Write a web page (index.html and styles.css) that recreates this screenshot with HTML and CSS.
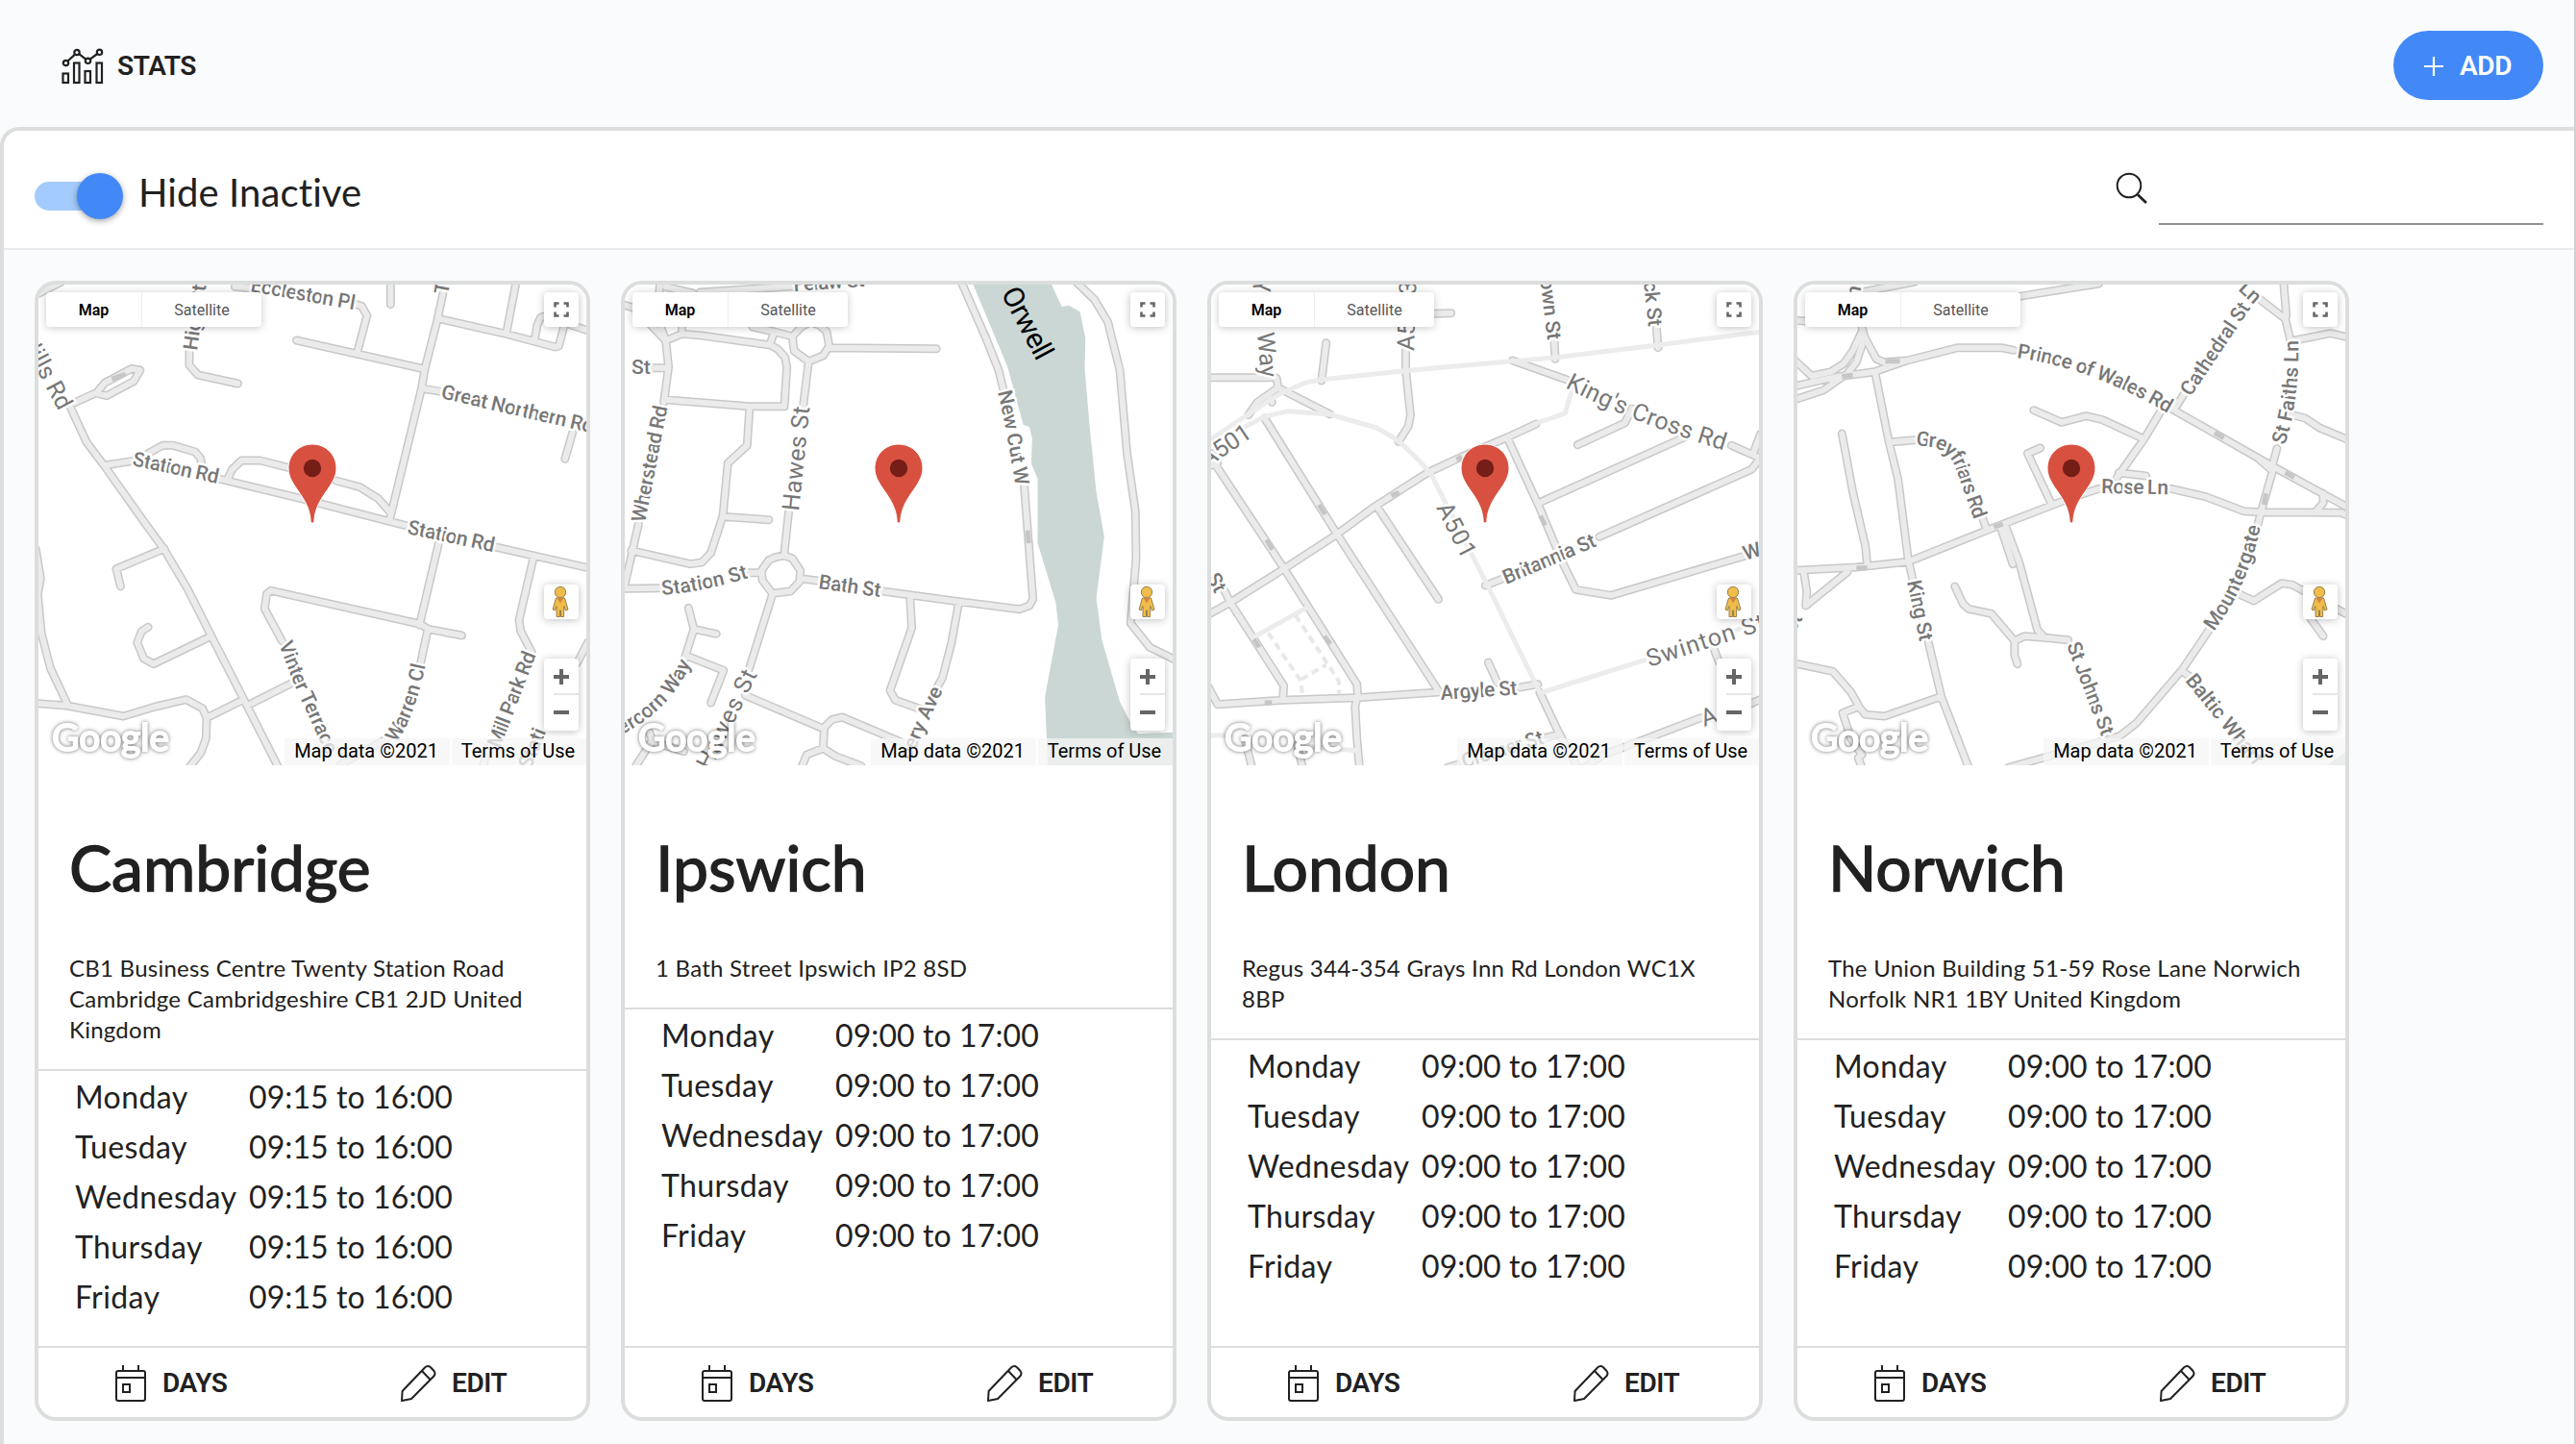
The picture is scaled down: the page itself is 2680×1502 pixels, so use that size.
FILE: index.html
```html
<!DOCTYPE html>
<html lang="en">
<head>
<meta charset="utf-8">
<title>Locations</title>
<link rel="stylesheet" href="styles.css">
</head>
<body>
<svg class="sprite" aria-hidden="true">
  <symbol id="i-stats" viewBox="0 0 44 38"><g fill="none" stroke="currentColor" stroke-width="2.2"><rect x="1.5" y="26.5" width="5.5" height="9.5"/><rect x="13" y="15.5" width="5.5" height="20.5"/><rect x="24.5" y="24" width="5.5" height="12"/><rect x="36.5" y="15.5" width="5.5" height="20.5"/><circle cx="4.5" cy="15.5" r="2.7"/><circle cx="16" cy="4.5" r="2.7"/><circle cx="27.5" cy="13.3" r="2.7"/><circle cx="39.5" cy="4.3" r="2.7"/><path d="M6.500 13.500 14 6.600M18.200 6.200 25.300 11.600M29.600 11.600 37.300 6"/></g></symbol>
  <symbol id="i-plus" viewBox="0 0 22 22"><path d="M11 0V22M0 11H22" stroke="currentColor" stroke-width="2.4"/></symbol>
  <symbol id="i-search" viewBox="0 0 34 34"><g fill="none" stroke="currentColor" stroke-width="2"><circle cx="14" cy="14" r="12.3"/><path d="M23 23.500 32 32" stroke-width="2.8"/></g></symbol>
  <symbol id="i-days" viewBox="0 0 34 40"><g fill="none" stroke="currentColor" stroke-width="2"><rect x="2" y="7" width="30" height="31" rx="2"/><path d="M2 14H32M9 1V7M25 1V7"/><rect x="9" y="21" width="7" height="8"/></g></symbol>
  <symbol id="i-edit" viewBox="0 0 38 40"><g fill="none" stroke="currentColor" stroke-width="2" stroke-linejoin="round"><path d="M2 38 2.600 28 26 3.500Q29 .8 32 3.200L35.500 7Q37.500 9.500 35.500 12.300L12 36Z"/><path d="M23 7 31.500 16"/></g></symbol>
  <symbol id="i-full" viewBox="0 0 16 16"><path d="M1.500 5.500V1.500H5.500M10.500 1.500H14.500V5.500M14.500 10.500V14.500H10.500M5.500 14.500H1.500V10.500" fill="none" stroke="#666" stroke-width="2.6"/></symbol>
  <symbol id="i-peg" viewBox="0 0 18 34"><g fill="#f0bc4b" stroke="#98804c" stroke-width="1"><path d="M4.500 13H13.500L17 25 14.500 26 12.800 21.500 12.500 32.500H9.500V26H8.500V32.500H5L5 21.500 3.200 26 1 25Z"/><circle cx="9" cy="7" r="5.7"/></g><path d="M5.500 13.200H12.500L9 18.500Z" fill="#d9853b"/></symbol>
  <symbol id="i-pin" viewBox="0 0 52 84"><path d="M26 1C12 1 1 12 1 26 1 45 23 55 24.200 81.500Q26 85 27.800 81.500C29 55 51 45 51 26 51 12 40 1 26 1Z" fill="#d85140" stroke="#fff" stroke-width="1"/><circle cx="26" cy="26" r="9.2" fill="#751e17"/></symbol>
  <symbol id="i-google" viewBox="0 0 140 50"><text class="google" x="8" y="33" textLength="122" lengthAdjust="spacingAndGlyphs">Google</text></symbol>
</svg>

<div class="page">
  <header class="topbar">
    <button class="btn stats"><svg class="i-stats"><use href="#i-stats"/></svg>STATS</button>
    <button class="btn add"><svg class="i-plus"><use href="#i-plus"/></svg>ADD</button>
  </header>
  <main class="panel">
    <div class="toolbar">
      <label class="toggle"><span class="track"><span class="thumb"></span></span>Hide Inactive</label>
      <div class="search"><svg class="i-search"><use href="#i-search"/></svg><span class="field"></span></div>
    </div>
    <div class="cards">

      <article class="card">
        <div class="map">
          <svg class="tiles" viewBox="27 33 1514 1500" preserveAspectRatio="none">
            <defs><path id="r1" class="road" d="M115 415L160 525 210 600 320 775 375 860 440 985 505 1130 600 1340 690 1540M120 405L188 370 210 340 285 295 308 300 290 335 215 380 188 372M20 65L90 25M444 235V285L468 315 578 342M570 40L620 45M905 95L920 100 935 130 908 245M740 207L1095 297M1000 20V95M1145 60L1130 140 1095 295 1085 360 998 765M1135 140L1320 187 1455 228 1465 225 1480 160M1320 185L1348 20M1398 208L1405 160 1415 135 1430 130M1500 160L1550 178M1090 358L1140 367M1503 495L1482 577M210 597L290 583M330 560L370 535 400 535 460 555 475 575 478 600M530 640L750 700 1000 773 1050 787M550 640L562 610 588 582 640 582 720 605M850 645L915 665 965 700 1000 745M1290 852L1550 918M1133 840L1080 1095M1395 885L1355 1080 1360 1115 1390 1180M1197 1128L1105 1108 1080 1092 670 988 658 998 652 1045 700 1145M1103 1108L1083 1215M375 857L242 920 254 975M505 1130L345 1217 318 1200 300 1150 312 1115 330 1102M730 1275L607 1345M590 1330L492 1385M20 1340L105 1347 262 1380 350 1350 435 1328 480 1355 492 1385 490 1450 475 1495 440 1545M20 860L33 950 25 1000 35 1120 60 1230 108 1345M1545 1150L1515 1215M860 1532L990 1450M1255 1540L1270 1470"/></defs>
            <use href="#r1" class="casing"/><use href="#r1" class="surface"/>
            <path class="arrow" d="M230 328L268 312"/>
          </svg>
          <svg class="labels" viewBox="0 0 570 500">
            <defs><path id="p1a" d="M250 374L267 418 325 546"/><path id="p1b" d="M372 477Q391 452 403 394L408 370"/></defs>
            <text transform="translate(220 7) rotate(10)" textLength="110">Eccleston Pl</text>
            <text transform="translate(418 118) rotate(13)" textLength="162">Great Northern Rd</text>
            <text transform="translate(97 188) rotate(12)" textLength="91">Station Rd</text>
            <text transform="translate(383 259) rotate(12)" textLength="92">Station Rd</text>
            <text class="lg end" transform="translate(21 132) rotate(62)">Hills Rd</text>
            <text transform="translate(165 69) rotate(-82)">High St</text>
            <text transform="translate(426 11) rotate(-80)">Tenison Rd</text>
            <text class="tight"><textPath href="#p1a">Vinter Terrace</textPath></text>
            <text class="tight"><textPath href="#p1b">Warren Cl</textPath></text>
            <text transform="translate(480 483) rotate(-69)" textLength="105">Mill Park Rd</text>
            <text transform="translate(512 505) rotate(-68)">Stati</text>
          </svg>
          <div class="maptype"><span class="on">Map</span><span>Satellite</span></div>
          <span class="ctl full"><svg><use href="#i-full"/></svg></span>
          <svg class="pin"><use href="#i-pin"/></svg>
          <span class="ctl peg"><svg><use href="#i-peg"/></svg></span>
          <span class="ctl zoom"><i class="in"></i><i class="out"></i></span>
          <svg class="logo"><use href="#i-google"/></svg>
          <div class="credit"><span>Map data ©2021</span><span>Terms of Use</span></div>
        </div>
        <h2>Cambridge</h2>
        <p class="address">CB1 Business Centre Twenty Station Road Cambridge Cambridgeshire CB1 2JD United Kingdom</p>
        <dl class="hours"><dt>Monday</dt><dd>09:15 to 16:00</dd><dt>Tuesday</dt><dd>09:15 to 16:00</dd><dt>Wednesday</dt><dd>09:15 to 16:00</dd><dt>Thursday</dt><dd>09:15 to 16:00</dd><dt>Friday</dt><dd>09:15 to 16:00</dd></dl>
        <footer><button class="btn"><svg class="i-days"><use href="#i-days"/></svg>DAYS</button><button class="btn"><svg class="i-edit"><use href="#i-edit"/></svg>EDIT</button></footer>
      </article>

      <article class="card">
        <div class="map">
          <svg class="tiles" viewBox="27 33 1514 1500" preserveAspectRatio="none">
            <defs><path id="r2" class="road" d="M20 95L50 105 100 160 140 208 185 187 240 192 430 222 450 235 470 260 475 290 468 413 370 413 140 392M140 205L148 290 135 400M95 293H148M125 20L122 60M140 40L215 60M140 205L125 160M185 187V160M235 57L500 38M380 165L440 180 490 195M440 182L428 220M515 165L490 195 495 240 535 273 575 255 592 225 585 180 565 160 540 150ZM592 230L888 233M535 275L520 412M480 742L467 880M372 415L365 535 312 590 298 755 265 870 240 900 208 905 45 863M298 757L425 767M65 780L25 980M20 982L125 980M355 932H405M440 885L467 878 490 888 512 925 510 960 485 990 435 997 407 955 405 925 425 893ZM512 950L565 958M740 990L950 1022 1118 1046 1145 1035 1155 1015 1130 650M815 1005L820 1105 760 1300 775 1330 850 1360M950 1025L930 1150 905 1260 890 1290M435 1000L370 1235M203 1042L218 1108 280 1123M218 1108L195 1190 300 1237 265 1338M195 1190L190 1210M360 1315L578 1420 575 1480 530 1500 515 1540M578 1415L600 1390 628 1383 800 1465M575 1480L610 1505 680 1535M955 20L1025 200 1060 300 1073 360M1270 20L1325 80 1362 150 1395 300 1415 560 1438 740 1440 890 1425 1090 1478 1165 1550 1205M95 1430L105 1460 190 1490M100 1460L55 1540"/></defs>
            <path class="water" d="M985 20L1205 30 1235 102 1255 98 1285 118 1300 200 1298 295 1312 480 1330 680 1352 820 1330 1010 1345 1140 1395 1335 1425 1400 1445 1435 1550 1430V1540H1196L1188 1320 1225 1095 1218 1025 1168 840V640L1150 590 1153 515 1145 477 1128 470 1085 290Z"/>
            <use href="#r2" class="casing"/><use href="#r2" class="surface"/>
            <path class="arrow" d="M1140 800L1143 840"/>
          </svg>
          <svg class="labels" viewBox="0 0 570 500">
            <defs><path id="p2a" d="M388 112Q397 148 408 220"/><path id="p2b" d="M-90 490Q30 480 69 394"/><path id="p2c" d="M39 323Q80 320 136 303"/></defs>
            <text transform="translate(176 7) rotate(-4)" textLength="74">Felaw St</text>
            <text transform="translate(7 93)">St</text>
            <text transform="translate(21 248) rotate(-79)" textLength="123">Wherstead Rd</text>
            <text class="lg" transform="translate(181 236) rotate(-84)" textLength="109">Hawes St</text>
            <text><textPath href="#p2c">Station St</textPath></text>
            <text transform="translate(201 316) rotate(8)" textLength="65">Bath St</text>
            <text class="tight"><textPath href="#p2a">New Cut W</textPath></text>
            <text class="river" transform="translate(391 9) rotate(62)" textLength="81">Orwell</text>
            <text class="lg" transform="translate(89 506) rotate(-64)" textLength="112">Hawes St</text>
            <text class="end"><textPath href="#p2b" startOffset="100%">Peppercorn Way</textPath></text>
            <text class="end" transform="translate(331 422) rotate(-65)">oery Ave</text>
          </svg>
          <div class="maptype"><span class="on">Map</span><span>Satellite</span></div>
          <span class="ctl full"><svg><use href="#i-full"/></svg></span>
          <svg class="pin"><use href="#i-pin"/></svg>
          <span class="ctl peg"><svg><use href="#i-peg"/></svg></span>
          <span class="ctl zoom"><i class="in"></i><i class="out"></i></span>
          <svg class="logo"><use href="#i-google"/></svg>
          <div class="credit"><span>Map data ©2021</span><span>Terms of Use</span></div>
        </div>
        <h2>Ipswich</h2>
        <p class="address">1 Bath Street Ipswich IP2 8SD</p>
        <dl class="hours"><dt>Monday</dt><dd>09:00 to 17:00</dd><dt>Tuesday</dt><dd>09:00 to 17:00</dd><dt>Wednesday</dt><dd>09:00 to 17:00</dd><dt>Thursday</dt><dd>09:00 to 17:00</dd><dt>Friday</dt><dd>09:00 to 17:00</dd></dl>
        <footer><button class="btn"><svg class="i-days"><use href="#i-days"/></svg>DAYS</button><button class="btn"><svg class="i-edit"><use href="#i-edit"/></svg>EDIT</button></footer>
      </article>

      <article class="card">
        <div class="map">
          <svg class="tiles" viewBox="27 33 1514 1500" preserveAspectRatio="none">
            <defs><path id="r3" class="road" d="M20 323H205M208 325L212 355 355 437M212 355L155 400 130 440M185 380L195 400M345 215L332 333M640 124L690 122M565 240V300L578 440 572 475 545 523M975 205L978 265M1258 170L1262 230M860 270L1010 330M1465 535L1545 575 1520 610 1100 820M1525 560L1545 500M1190 420L1170 465 1040 533M925 468L845 510 720 570 625 620 480 725 375 812 228 920 80 1025 20 1062M845 510L935 730 1000 905 1035 985 1132 1003 1500 880M935 713L1340 507M175 450L375 812 655 1300M485 725L655 1015M20 600L45 590M30 560L42 600 232 925 430 1280 432 1315 425 1350 430 1450 437 1540M65 990L80 1025 228 1285 225 1330M20 1290L45 1343 225 1330 430 1322 655 1305M785 972L835 950M793 1212L818 1275M880 1290L930 1280M935 1305L985 1425 1040 1540M950 1447L990 1437M1410 1150L1430 1210M1380 1385L1160 1480 1110 1500 1060 1540M1510 1345L1550 1325M120 1450L140 1540M265 1470L280 1540M680 1540L710 1530"/></defs>
            <use href="#r3" class="casing"/><use href="#r3" class="surface"/>
            <path class="road main" d="M20 520L215 375 290 338 330 330 560 302 860 272 980 260 1260 222 1550 180M20 535L175 445 240 428 355 438 485 480 545 520 600 580 635 625 790 970 935 1305M920 468L1005 435 1025 360M935 1308L1225 1205M1480 1110L1550 1090M150 1130L285 1045M20 1440H80M300 1475L430 1487"/>
            <path class="road dashed" d="M260 1065L380 1270V1310M185 1120L275 1270 280 1320M275 1265L345 1220"/>
            <path class="arrow" d="M325 720L342 750M180 830L197 860M705 580L720 570M525 692L547 682M937 755L950 785M340 1130L357 1155M145 1140L160 1165M175 1338L195 1337"/>
          </svg>
          <svg class="labels" viewBox="0 0 570 500">
            <defs><path id="p3a" d="M368 107Q450 150 570 183"/></defs>
            <text class="lg end" transform="translate(52 97) rotate(85)">York Way</text>
            <text class="lg" transform="translate(211 69) rotate(-88)">A5203</text>
            <text class="lg end" transform="translate(44 158) rotate(-34)">A501</text>
            <text class="end" transform="translate(350 58) rotate(83)">own St</text>
            <text class="end" transform="translate(455 44) rotate(84)">ck St</text>
            <text class="lg wide"><textPath href="#p3a">King's Cross Rd</textPath></text>
            <text class="lg" transform="translate(234 232) rotate(63)" textLength="61">A501</text>
            <text transform="translate(307 312) rotate(-23)" textLength="103">Britannia St</text>
            <text transform="translate(556 287) rotate(-18)">W</text>
            <text class="lg" transform="translate(456 398) rotate(-18)" textLength="128">Swinton St</text>
            <text transform="translate(239 432) rotate(-4)" textLength="80">Argyle St</text>
            <text class="lg" transform="translate(513 460) rotate(-20)">Ac</text>
            <text transform="translate(263 503) rotate(-17)" textLength="88">Cromer St</text>
            <text class="end" transform="translate(4 322) rotate(62)">St</text>
          </svg>
          <div class="maptype"><span class="on">Map</span><span>Satellite</span></div>
          <span class="ctl full"><svg><use href="#i-full"/></svg></span>
          <svg class="pin"><use href="#i-pin"/></svg>
          <span class="ctl peg"><svg><use href="#i-peg"/></svg></span>
          <span class="ctl zoom"><i class="in"></i><i class="out"></i></span>
          <svg class="logo"><use href="#i-google"/></svg>
          <div class="credit"><span>Map data ©2021</span><span>Terms of Use</span></div>
        </div>
        <h2>London</h2>
        <p class="address">Regus 344-354 Grays Inn Rd London WC1X 8BP</p>
        <dl class="hours"><dt>Monday</dt><dd>09:00 to 17:00</dd><dt>Tuesday</dt><dd>09:00 to 17:00</dd><dt>Wednesday</dt><dd>09:00 to 17:00</dd><dt>Thursday</dt><dd>09:00 to 17:00</dd><dt>Friday</dt><dd>09:00 to 17:00</dd></dl>
        <footer><button class="btn"><svg class="i-days"><use href="#i-days"/></svg>DAYS</button><button class="btn"><svg class="i-edit"><use href="#i-edit"/></svg>EDIT</button></footer>
      </article>

      <article class="card">
        <div class="map">
          <svg class="tiles" viewBox="27 33 1514 1500" preserveAspectRatio="none">
            <defs><path id="r4" class="road" d="M20 145L60 148M210 55L350 25M640 70L860 30M205 165L212 195 245 265 265 275 330 270M20 270L68 320M205 180L180 240 155 280 120 305 68 318M212 200L190 275 165 310 100 362 20 392M20 350L130 322 240 305 330 270 470 230 590 230 625 238M242 310L280 525 305 640 333 890M280 525L350 518M150 498L180 680 215 850 220 910M20 925L190 915 333 898 550 800 730 722 780 700 860 670M45 935L53 990 50 1035 165 930M335 900L345 950M388 1145L425 1320 500 1540M535 750L550 798M590 795L622 905M600 780L640 900 690 1110 710 1135M462 975L485 1030 500 1045 563 1060 627 1145 655 1130 710 1135 775 1142M627 1150V1190L635 1217M680 425L757 463 825 443 870 455 985 515M1030 430L985 515 910 635M730 720L663 560 698 543M915 620L990 630M1060 670L1155 695 1260 740 1310 743 1530 745 1550 755M1060 420L1340 600 1550 730M1095 375L1070 420M1300 575L1340 615 1308 743 1295 800M1340 595L1352 545M1480 685V715L1460 740M1300 75L1375 140 1390 210M1370 20L1378 130M1388 210L1500 185 1550 198M1395 440L1430 450 1470 480 1550 518M1165 1110L1090 1235 965 1400 920 1440 850 1465 610 1540M1090 1240L1110 1255M1250 1000L1288 1020 1365 965 1395 970 1550 1065M1445 1075L1480 1130M20 1215L125 1240 175 1305 200 1355 215 1375 268 1380 420 1320M195 1350L152 1370 175 1450 205 1500 195 1510 205 1540"/></defs>
            <path class="water" d="M1480 1540L1545 1490V1540Z"/>
            <use href="#r4" class="casing"/><use href="#r4" class="surface"/>
            <path class="arrow" d="M270 272H310M150 320L180 315M190 917H220M570 790L595 780M1180 495L1205 512M1375 620L1400 635M1322 685L1316 720"/>
          </svg>
          <svg class="labels" viewBox="0 0 570 500">
            <defs><path id="p4a" d="M228 76Q312 88 395 140"/><path id="p4b" d="M507 167Q523 120 521 50"/><path id="p4c" d="M123 167L141 169Q160 175 165 192L190 262"/><path id="p4d" d="M433 361Q472 310 484 240"/></defs>
            <text class="tight"><textPath href="#p4a">Prince of Wales Rd</textPath></text>
            <text transform="translate(409 117) rotate(-56)" textLength="112">Cathedral St</text>
            <text class="end" transform="translate(475 21) rotate(42)">s Ln</text>
            <text><textPath href="#p4b">St Faiths Ln</textPath></text>
            <text class="tighter"><textPath href="#p4c">Greyfriars Rd</textPath></text>
            <text transform="translate(316 217) rotate(1)" textLength="70">Rose Ln</text>
            <text transform="translate(114 309) rotate(78)" textLength="64">King St</text>
            <text><textPath href="#p4d">Mountergate</textPath></text>
            <text transform="translate(280 375) rotate(69)" textLength="102">St Johns St</text>
            <text transform="translate(403 412) rotate(51)">Baltic Wharf</text>
            <text transform="translate(-4 364) rotate(-60)">St</text>
            <text transform="translate(64 14) rotate(-78)">n</text>
          </svg>
          <div class="maptype"><span class="on">Map</span><span>Satellite</span></div>
          <span class="ctl full"><svg><use href="#i-full"/></svg></span>
          <svg class="pin"><use href="#i-pin"/></svg>
          <span class="ctl peg"><svg><use href="#i-peg"/></svg></span>
          <span class="ctl zoom"><i class="in"></i><i class="out"></i></span>
          <svg class="logo"><use href="#i-google"/></svg>
          <div class="credit"><span>Map data ©2021</span><span>Terms of Use</span></div>
        </div>
        <h2>Norwich</h2>
        <p class="address">The Union Building 51-59 Rose Lane Norwich Norfolk NR1 1BY United Kingdom</p>
        <dl class="hours"><dt>Monday</dt><dd>09:00 to 17:00</dd><dt>Tuesday</dt><dd>09:00 to 17:00</dd><dt>Wednesday</dt><dd>09:00 to 17:00</dd><dt>Thursday</dt><dd>09:00 to 17:00</dd><dt>Friday</dt><dd>09:00 to 17:00</dd></dl>
        <footer><button class="btn"><svg class="i-days"><use href="#i-days"/></svg>DAYS</button><button class="btn"><svg class="i-edit"><use href="#i-edit"/></svg>EDIT</button></footer>
      </article>

    </div>
  </main>
</div>
</body>
</html>
```
FILE: styles.css
```css
* { box-sizing: border-box; }
html, body { margin: 0; height: 100%; }
body { background: #f9fbfd; color: #212121; font-family: Lato, sans-serif; overflow: hidden; }
.sprite { display: block; width: 0; height: 0; }
.page { height: 1502px; border-right: 2px solid #d0d0d0; display: flex; flex-direction: column; }

.btn { display: flex; align-items: center; border: 0; padding: 2px 0 0; background: none; color: inherit; font: 600 28px/40px Roboto, sans-serif; letter-spacing: -.4px; }
.topbar { height: 132px; padding: 4px 32px 0 64px; display: flex; align-items: center; justify-content: space-between; flex: none; }
.stats { gap: 14px; }
.i-stats { width: 44px; height: 38px; }
.add { width: 156px; height: 72px; border-radius: 36px; background: #4289f7; color: #fff; padding-left: 32px; gap: 17px; }
.i-plus { width: 20px; height: 22px; }

.panel { flex: 1; min-height: 0; border: 4px solid #dcdddd; border-width: 4px 0 0 4px; border-top-left-radius: 20px; overflow: hidden; background: #fafbfd; }
.toolbar { height: 124px; background: #fff; border-bottom: 2px solid #e8eaec; padding: 0 32px; display: flex; justify-content: space-between; }
.toggle { display: flex; align-items: center; gap: 16px; font-size: 40px; line-height: 48px; padding-top: 6px; letter-spacing: .1px; }
.track { width: 92px; height: 30px; border-radius: 15px; margin-top: 8px; display: flex; align-items: center; justify-content: flex-end; background: linear-gradient(90deg, #a3cbfb 70px, transparent 70px); }
.thumb { width: 48px; height: 48px; border-radius: 50%; background: #4289f7; box-shadow: 0 2px 6px rgba(0,0,0,.35); flex: none; }
.search { display: flex; gap: 11px; padding-top: 43px; }
.i-search { width: 34px; height: 34px; }
.field { width: 400px; height: 55px; border-bottom: 2px solid #929292; }

.cards { display: flex; gap: 32px; padding: 32px; }
.card { width: 578px; height: 1186px; border: 4px solid #dcdddd; border-radius: 22px; background: #fff; overflow: hidden; display: flex; flex-direction: column; }
.card h2 { margin: 64px 32px 0; font-size: 66px; line-height: 84px; font-weight: 400; -webkit-text-stroke: 1.4px #212121; }
.address { margin: 47px 32px 0; padding-bottom: 25px; font-size: 24px; line-height: 32px; letter-spacing: .25px; }
.hours { margin: 0; border-top: 2px solid #dcdddd; display: grid; grid-template-columns: 181px 1fr; grid-auto-rows: 52px; align-items: center; padding-left: 38px; font-size: 32px; }
.hours dt { letter-spacing: .4px; }
.hours dd { margin: 0; letter-spacing: .1px; }
.card footer { margin-top: auto; height: 74px; border-top: 2px solid #dcdddd; display: grid; grid-template-columns: 297px 1fr; padding-left: 79px; flex: none; }
.card footer .btn { gap: 16px; padding-top: 1px; }
.i-days { width: 34px; height: 40px; }
.i-edit { width: 38px; height: 40px; }

.map { position: relative; height: 500px; overflow: hidden; background: #fff; flex: none; font-family: Roboto, sans-serif; }
.tiles, .labels { position: absolute; inset: 0; width: 570px; height: 500px; }
.road { vector-effect: non-scaling-stroke; fill: none; stroke-linecap: round; stroke-linejoin: round; }
.casing { stroke: #c8c8c8; stroke-width: 9px; }
.surface { stroke: #ebebeb; stroke-width: 6px; }
.main { stroke: #ececec; stroke-width: 5px; }
.dashed { stroke: #e8e8e8; stroke-width: 4px; stroke-dasharray: 8 5; stroke-linecap: butt; }
.arrow { vector-effect: non-scaling-stroke; fill: none; stroke: #c6c6c6; stroke-width: 5px; }
.water { fill: #cbd7d4; }
.labels text { font-size: 21px; font-weight: 500; fill: #777; stroke: #fff; stroke-width: 5px; stroke-linejoin: round; paint-order: stroke; }
.labels .lg { font-size: 25px; font-weight: 400; }
.labels .wide { letter-spacing: .4px; }
.labels .tight { letter-spacing: -.5px; }
.labels .tighter { letter-spacing: -1.2px; }
.labels .end { text-anchor: end; }
.labels .river { font-size: 30px; font-weight: 400; fill: #000; stroke: none; }

.maptype { position: absolute; left: 8px; top: 8px; height: 36px; display: flex; border-radius: 4px; box-shadow: 0 1px 8px rgba(0,0,0,.22); background: #fff; font-size: 16px; line-height: 37px; text-align: center; color: #565656; }
.maptype span { width: 124px; }
.maptype .on { width: 100px; color: #000; font-weight: 600; border-right: 1px solid #eee; }
.ctl { position: absolute; left: 526px; width: 36px; height: 36px; border-radius: 4px; background: #fff; box-shadow: 0 1px 8px rgba(0,0,0,.25); display: flex; align-items: center; justify-content: center; }
.full { top: 8px; }
.full svg { width: 16px; height: 16px; }
.peg { top: 312px; }
.peg svg { width: 18px; height: 34px; margin-right: 2px; }
.zoom { top: 389px; height: 75px; flex-direction: column; }
.zoom i { width: 100%; height: 37px; background: linear-gradient(#666, #666) center / 16px 4px no-repeat; }
.zoom .in { background: linear-gradient(#666, #666) center / 16px 4px no-repeat, linear-gradient(#666, #666) center / 4px 16px no-repeat, linear-gradient(#e6e6e6, #e6e6e6) 10px 100% / 28px 2px no-repeat; }
.pin { position: absolute; left: 259px; top: 165px; width: 52px; height: 84px; }
.logo { position: absolute; left: 6px; top: 452px; width: 140px; height: 50px; filter: drop-shadow(0 0 2px rgba(0,0,0,.55)); }
.google { font: 400 38px Lato, sans-serif; fill: #fff; stroke: #fff; stroke-width: 2px; }
.credit { position: absolute; right: 0; bottom: 0; height: 28px; display: flex; gap: 2px; font-size: 20px; line-height: 27px; color: #000; text-align: center; }
.credit span { width: 172px; padding-right: 2px; background: rgba(245,245,245,.75); white-space: nowrap; }
.credit span + span { width: 140px; }
```
